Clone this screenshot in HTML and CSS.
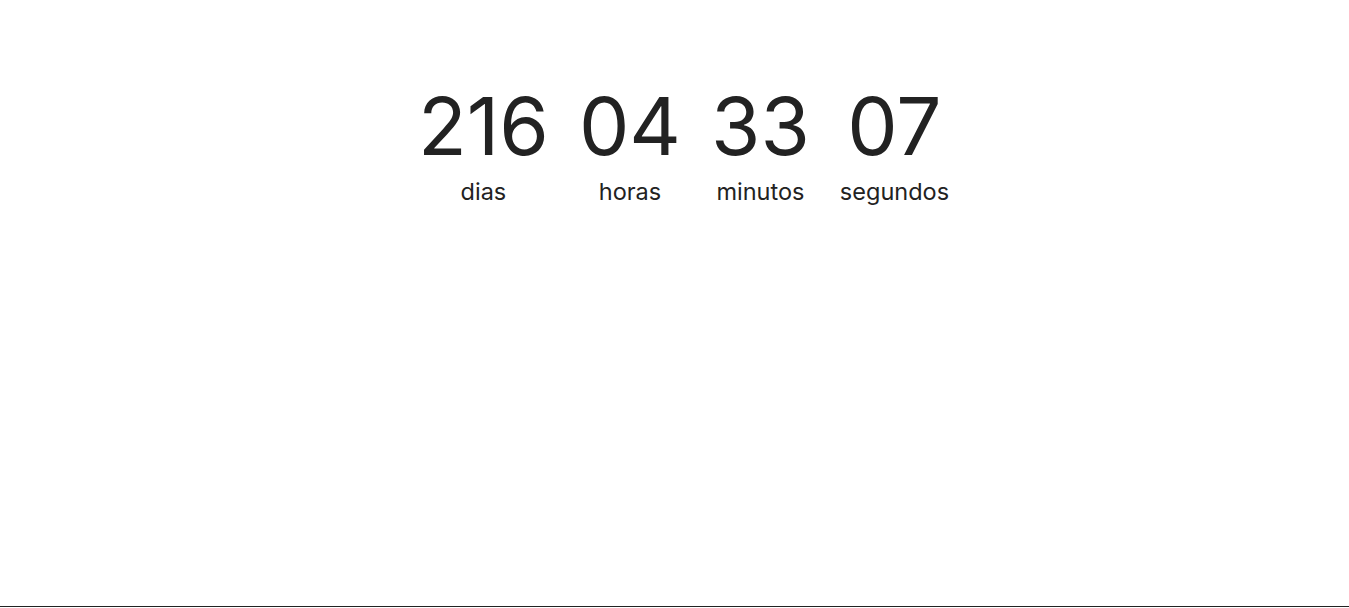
FILE: index.html
```html
<!DOCTYPE html>
<html lang="pt">
<head>
<meta charset="utf-8">
<title>Contagem</title>
<link rel="stylesheet" href="styles.css">
</head>
<body>
<main class="page">
  <section class="countdown">
    <div class="unit"><span class="num">216</span><span class="label">dias</span></div>
    <div class="unit"><span class="num">04</span><span class="label">horas</span></div>
    <div class="unit"><span class="num">33</span><span class="label">minutos</span></div>
    <div class="unit"><span class="num">07</span><span class="label">segundos</span></div>
  </section>
</main>
<footer class="footer"></footer>
</body>
</html>
```
FILE: styles.css
```css
html, body { margin: 0; padding: 0; background: #fff; }
body { font-family: Inter, "Noto Sans", sans-serif; color: #222; overflow: hidden; }
.page { height: 606px; }
.countdown {
  display: flex;
  justify-content: center;
  gap: 30px;
  padding-top: 86px;
  padding-left: 18px;
}
.unit { display: flex; flex-direction: column; align-items: center; }
.num { font-size: 80px; line-height: 1; font-weight: 400; letter-spacing: 0; }
.label { font-size: 23.5px; line-height: 1; margin-top: 14px; }
.footer { border-top: 1px solid #222; height: 20px; }
```
